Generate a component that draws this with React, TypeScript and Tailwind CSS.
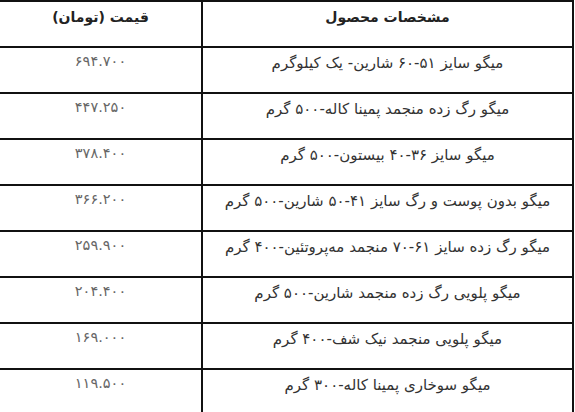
const ROWS = [
  { name: "میگو سایز ۵۱-۶۰ شارین- یک کیلوگرم", price: "۶۹۴.۷۰۰" },
  { name: "میگو رگ زده منجمد پمینا کاله-۵۰۰ گرم", price: "۴۴۷.۲۵۰" },
  { name: "میگو سایز ۳۶-۴۰ بیستون-۵۰۰ گرم", price: "۳۷۸.۴۰۰" },
  { name: "میگو بدون پوست و رگ سایز ۴۱-۵۰ شارین-۵۰۰ گرم", price: "۳۶۶.۲۰۰" },
  { name: "میگو رگ زده سایز ۶۱-۷۰ منجمد مه‌پروتئین-۴۰۰ گرم", price: "۲۵۹.۹۰۰" },
  { name: "میگو پلویی رگ زده منجمد شارین-۵۰۰ گرم", price: "۲۰۴.۴۰۰" },
  { name: "میگو پلویی منجمد نیک شف-۴۰۰ گرم", price: "۱۶۹.۰۰۰" },
  { name: "میگو سوخاری پمینا کاله-۳۰۰ گرم", price: "۱۱۹.۵۰۰" },
];

export default function App() {
  return (
    <div className="h-[412px] w-[575px] overflow-hidden bg-white">
      <div
        dir="rtl"
        className="w-[574px]"
        style={{ fontFamily: '"DejaVu Sans", Tahoma, sans-serif' }}
      >
        {/* header */}
        <div className="flex h-[46px] border-t-2 border-[#111]">
          <div className="w-[373px] shrink-0 border-x-2 border-[#111] pt-[5px] text-center text-[14px] font-bold leading-[20px] text-[#222]">
            مشخصات محصول
          </div>
          <div className="flex-1 pt-[5px] text-center text-[14px] font-bold leading-[20px] text-[#222]">
            قیمت (تومان)
          </div>
        </div>

        {ROWS.map((row) => (
          <div key={row.price} className="flex h-[46px] border-t-2 border-[#111]">
            <div className="w-[373px] shrink-0 border-x-2 border-[#111] pt-[4px] text-center text-[15px] leading-[22px] text-[#333]">
              {row.name}
            </div>
            <div className="flex-1 pt-[3px] text-center text-[14.5px] leading-[20px] text-[#666]">
              {row.price}
            </div>
          </div>
        ))}
      </div>
    </div>
  );
}
